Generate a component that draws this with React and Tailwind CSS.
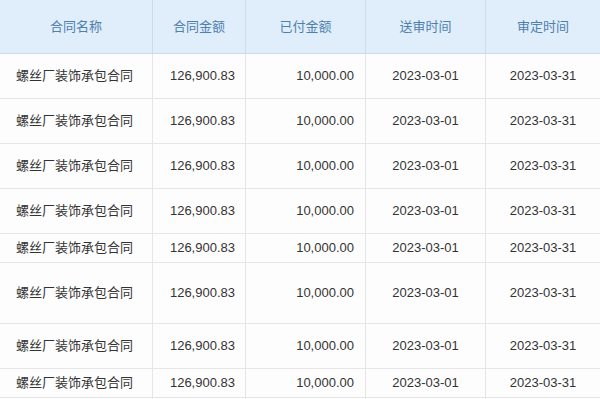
const headers = ["合同名称", "合同金额", "已付金额", "送审时间", "审定时间"];

const rowHeights = ["h-[45px]", "h-[45px]", "h-[45px]", "h-[45px]", "h-[29px]", "h-[61px]", "h-[45px]", "h-[29px]"];

const row = {
  name: "螺丝厂装饰承包合同",
  amount: "126,900.83",
  paid: "10,000.00",
  sent: "2023-03-01",
  approved: "2023-03-31",
};

const cols = "grid grid-cols-[153px_93px_120px_120px_114px]";

export default function App() {
  return (
    <div
      className="w-[600px] h-[399px] overflow-hidden bg-[#fdfdfd] text-[13px] text-[#333]"
      style={{ fontFamily: '"Liberation Sans", "Noto Sans CJK SC", sans-serif' }}
    >
      <div className={`${cols} h-[54px] bg-[#e0eefb] text-[#4d80ad]`}>
        {headers.map((h, i) => (
          <div
            key={h}
            className={`flex items-center justify-center border-b border-[#c9dcef] ${i < 4 ? "border-r" : ""}`}
          >
            {h}
          </div>
        ))}
      </div>
      {rowHeights.map((h, i) => (
        <div key={i} className={`${cols} ${h}`}>
          <div className="flex items-center pl-4 border-r border-b border-[#e6e6e6]">{row.name}</div>
          <div className="flex items-center justify-end pr-[10px] border-r border-b border-[#e6e6e6]">{row.amount}</div>
          <div className="flex items-center justify-end pr-[11px] border-r border-b border-[#e6e6e6]">{row.paid}</div>
          <div className="flex items-center justify-center border-r border-b border-[#e6e6e6]">{row.sent}</div>
          <div className="flex items-center justify-center border-b border-[#e6e6e6]">{row.approved}</div>
        </div>
      ))}
      <div className={`${cols} h-[2px]`}>
        <div className="border-r border-[#e6e6e6]" />
        <div className="border-r border-[#e6e6e6]" />
        <div className="border-r border-[#e6e6e6]" />
        <div className="border-r border-[#e6e6e6]" />
        <div />
      </div>
    </div>
  );
}
